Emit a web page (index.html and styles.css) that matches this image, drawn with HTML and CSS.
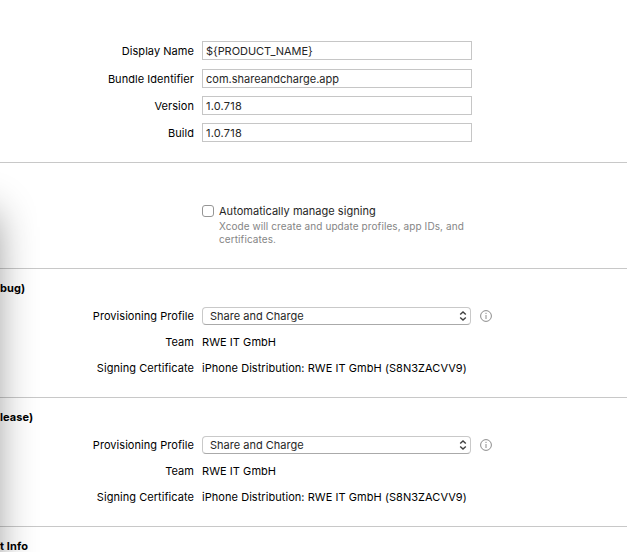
FILE: index.html
```html
<!DOCTYPE html>
<html lang="en">
<head>
<meta charset="utf-8">
<title>Target Settings</title>
<link rel="stylesheet" href="styles.css">
</head>
<body>
<main class="editor">
  <section class="section identity">
    <div class="row field-row first"><label class="label" for="name">Display Name</label><input class="field product" id="name" value="${PRODUCT_NAME}"></div>
    <div class="row field-row"><label class="label" for="bundle">Bundle Identifier</label><input class="field bundle" id="bundle" value="com.shareandcharge.app"></div>
    <div class="row field-row"><label class="label" for="version">Version</label><input class="field version" id="version" value="1.0.718"></div>
    <div class="row field-row"><label class="label" for="build">Build</label><input class="field version" id="build" value="1.0.718"></div>
  </section>
  <section class="section signing">
    <span class="checkbox"></span>
    <div>
      <div class="check-label">Automatically manage signing</div>
      <div class="hint">Xcode will create and update profiles, app IDs, and<br>certificates.</div>
    </div>
  </section>
  <section class="section profile">
    <h2 class="title">bug)</h2>
    <div class="row"><span class="label">Provisioning Profile</span>
      <div class="control"><div class="popup"><span>Share and Charge</span><svg class="arrows" viewBox="0 0 8 12"><path d="M1.2 4.6 4 1.9 6.8 4.6M1.2 7.4 4 10.1 6.8 7.4"/></svg></div>
      <svg class="info" viewBox="0 0 12 12"><circle cx="6" cy="6" r="5.4"/><path d="M6 2.8v1.2M6 5v4"/></svg></div></div>
    <div class="row"><span class="label">Team</span><span class="team">RWE IT GmbH</span></div>
    <div class="row"><span class="label">Signing Certificate</span><span class="cert">iPhone Distribution: RWE IT GmbH (S8N3ZACVV9)</span></div>
  </section>
  <section class="section profile">
    <h2 class="title">lease)</h2>
    <div class="row"><span class="label">Provisioning Profile</span>
      <div class="control"><div class="popup"><span>Share and Charge</span><svg class="arrows" viewBox="0 0 8 12"><path d="M1.2 4.6 4 1.9 6.8 4.6M1.2 7.4 4 10.1 6.8 7.4"/></svg></div>
      <svg class="info" viewBox="0 0 12 12"><circle cx="6" cy="6" r="5.4"/><path d="M6 2.8v1.2M6 5v4"/></svg></div></div>
    <div class="row"><span class="label">Team</span><span class="team">RWE IT GmbH</span></div>
    <div class="row"><span class="label">Signing Certificate</span><span class="cert">iPhone Distribution: RWE IT GmbH (S8N3ZACVV9)</span></div>
  </section>
  <section class="last"><h2 class="title">t Info</h2></section>
  <div class="window-shadow"></div>
</main>
</body>
</html>
```
FILE: styles.css
```css
* { box-sizing: border-box; }
body { margin: 0; background: #fff; color: #000; font: 11px/14px Inter, "Liberation Sans", sans-serif; letter-spacing: 0.05px; }
.editor { position: relative; width: 627px; height: 552px; overflow: hidden; white-space: nowrap; }
.section { border-bottom: 1px solid #c8c8c8; }
.identity { height: 163px; padding-top: 41px; display: flex; flex-direction: column; gap: 8px; }
.row { display: grid; grid-template-columns: 194px 1fr; column-gap: 8px; align-items: center; }
.field-row { height: 19px; }
.first { margin-bottom: 1px; }
.label { text-align: right; }
.field { width: 270px; height: 19px; padding: 0 3px; border: 1px solid #c6c6c6; border-radius: 0; background: #fff; color: #262626; font: inherit; letter-spacing: inherit; outline: 0; }
.product { letter-spacing: -0.05px; }
.bundle { letter-spacing: 0; }
.version { letter-spacing: 0.2px; }
.signing { height: 106px; padding: 41px 0 0 202px; display: flex; gap: 5px; }
.checkbox { width: 12px; height: 12px; margin-top: 1px; border: 1px solid #969696; border-radius: 3px; background: #fff; }
.check-label { color: #262626; letter-spacing: 0.03px; }
.hint { margin-top: 2px; color: #858585; font-size: 10px; line-height: 13px; letter-spacing: 0.09px; }
.profile { height: 129px; padding-top: 12px; }
.title { margin: 0; height: 14px; font-size: 11px; font-weight: 700; line-height: 14px; letter-spacing: 0.1px; }
.profile .row { height: 26px; }
.profile .title { margin-bottom: 8px; }
.control { display: flex; align-items: center; gap: 9px; }
.popup { width: 269px; height: 18px; padding: 0 3px 0 7px; display: flex; align-items: center; justify-content: space-between; border: 1px solid #c9c9c9; border-bottom-color: #aaa; border-radius: 4px; background: #fff; color: #262626; letter-spacing: 0; }
.arrows { width: 8px; height: 12px; fill: none; stroke: #404040; stroke-width: 1.4; }
.info { width: 12px; height: 12px; fill: none; stroke: #8c8c8c; stroke-width: 1; }
.last { padding-top: 12px; }
.window-shadow { position: absolute; left: -62px; top: 219px; width: 50px; height: 420px; box-shadow: 0 0 42px 6px rgba(0, 0, 0, 0.47); pointer-events: none; }
```
